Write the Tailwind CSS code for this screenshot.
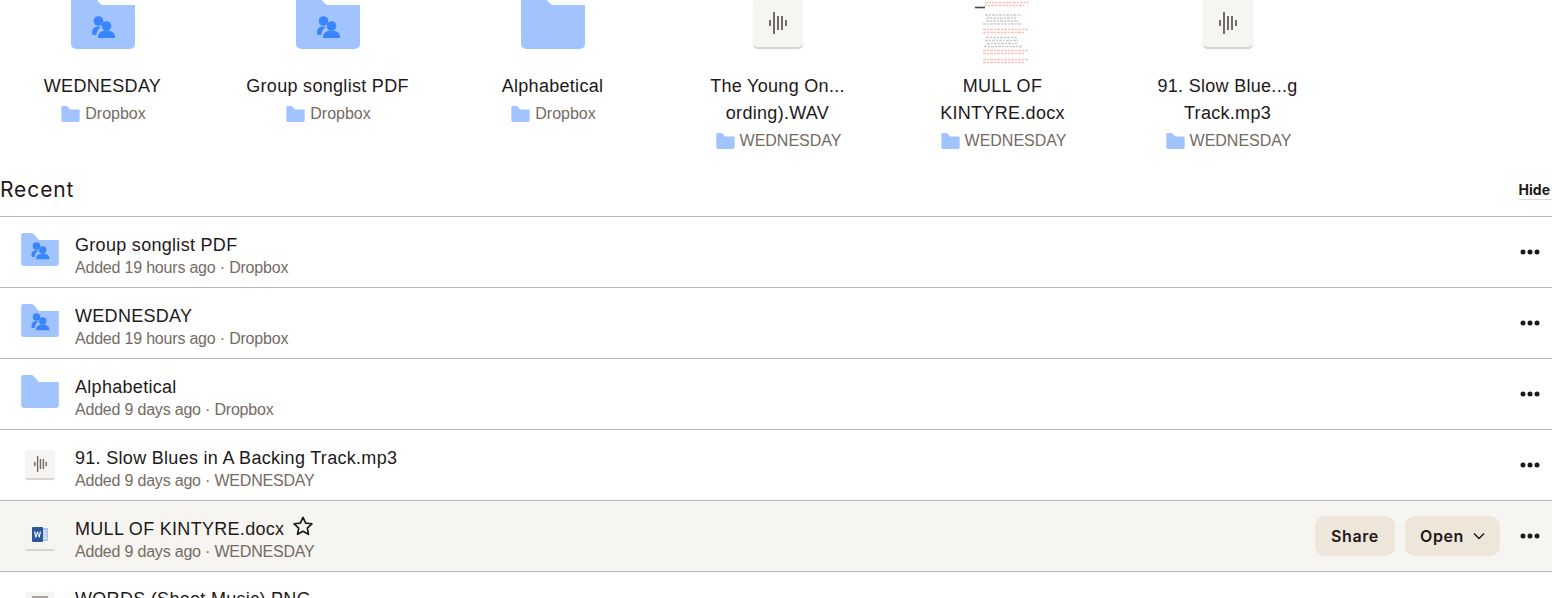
<!DOCTYPE html>
<html lang="en">
<head>
  <meta charset="UTF-8" />
  <title>Dropbox - Recent</title>
  <script src="https://cdn.jsdelivr.net/npm/@tailwindcss/browser@4"></script>
</head>
<body class="bg-white text-[#1e1919] font-['Liberation_Sans',sans-serif] h-[598px] w-[1552px] overflow-hidden">
  <svg class="hidden">
    <defs>
      <symbol id="folder" viewBox="0 0 64 56"><path fill="#a1c4ff" d="M0 4a4 4 0 0 1 4-4h13c2 0 3 .6 4.500 2l7 8c1 1.300 2 2 3.500 2h32v39a5 5 0 0 1-5 5H5a5 5 0 0 1-5-5z"/></symbol>
      <symbol id="people" viewBox="0 0 64 56"><g fill="#3984ff"><circle cx="27.500" cy="28" r="4.800"/><path d="M21 40c0-4 2-6.500 6-6.500 1 0 2 .2 3 .6-2.500 1.400-4 3.400-4.500 6.900-.2.800-.5 1-1 1H23c-1.300 0-2-.8-2-2z"/><circle cx="35.500" cy="33" r="4.800"/><path d="M27 45v-1c0-3.800 3-6.500 8.500-6.500S44 40.200 44 44v1z"/></g></symbol>
      <symbol id="wave" viewBox="0 0 18 22"><g fill="#736c64"><rect x="0" y="8" width="2" height="6"/><rect x="4" y="0" width="2" height="22"/><rect x="8" y="4" width="2" height="14"/><rect x="12" y="4" width="2" height="14"/><rect x="16" y="8" width="2" height="6"/></g></symbol>
      <symbol id="dots" viewBox="0 0 20 6"><g fill="#1e1919"><circle cx="3" cy="3" r="2.500"/><circle cx="10" cy="3" r="2.500"/><circle cx="17" cy="3" r="2.500"/></g></symbol>
    </defs>
  </svg>

  <section class="flex h-[160px] -ml-[10px]">
    <div class="w-[225px] h-[160px] flex flex-col items-center">
      <div class="h-[57px] -mt-2 w-16 relative shrink-0"><svg class="w-16 h-14 absolute bottom-0"><use href="#folder"/></svg><svg class="w-16 h-14 absolute bottom-0"><use href="#people"/></svg></div>
      <p class="mt-[24px] text-[18px] tracking-[0.3px] leading-[27px]">WEDNESDAY</p>
      <p class="ml-[2px] flex items-center gap-[5px] text-[#736c64] text-[16px] leading-[27px]"><svg class="w-[19px] h-[16px]"><use href="#folder"/></svg>Dropbox</p>
    </div>
    <div class="w-[225px] h-[160px] flex flex-col items-center">
      <div class="h-[57px] -mt-2 w-16 relative shrink-0"><svg class="w-16 h-14 absolute bottom-0"><use href="#folder"/></svg><svg class="w-16 h-14 absolute bottom-0"><use href="#people"/></svg></div>
      <p class="mt-[24px] text-[18px] tracking-[0.3px] leading-[27px]">Group songlist PDF</p>
      <p class="ml-[2px] flex items-center gap-[5px] text-[#736c64] text-[16px] leading-[27px]"><svg class="w-[19px] h-[16px]"><use href="#folder"/></svg>Dropbox</p>
    </div>
    <div class="w-[225px] h-[160px] flex flex-col items-center">
      <div class="h-[57px] -mt-2 w-16 relative shrink-0"><svg class="w-16 h-14 absolute bottom-0"><use href="#folder"/></svg></div>
      <p class="mt-[24px] text-[18px] tracking-[0.3px] leading-[27px]">Alphabetical</p>
      <p class="ml-[2px] flex items-center gap-[5px] text-[#736c64] text-[16px] leading-[27px]"><svg class="w-[19px] h-[16px]"><use href="#folder"/></svg>Dropbox</p>
    </div>
    <div class="w-[225px] h-[160px] flex flex-col items-center">
      <div class="h-[57px] -mt-2 shrink-0 flex items-end"><div class="w-[50px] h-[50px] flex items-center justify-center bg-[#f7f5f2] rounded-[5px] border-b-2 border-[#d9d4cd] shadow-[0_0_1px_#d9d4cd]"><svg class="w-[18px] h-[22px]"><use href="#wave"/></svg></div></div>
      <p class="mt-[24px] text-[18px] tracking-[0.3px] leading-[27px] text-center">The Young On...<br>ording).WAV</p>
      <p class="ml-[2px] flex items-center gap-[5px] text-[#736c64] text-[16px] leading-[27px]"><svg class="w-[19px] h-[16px]"><use href="#folder"/></svg>WEDNESDAY</p>
    </div>
    <div class="w-[225px] h-[160px] flex flex-col items-center">
      <div class="h-[57px] -mt-2 shrink-0">
        <svg class="w-[56px] h-[64px] mt-2" viewBox="0 0 56 64" fill="none" stroke-width="1.600" stroke-dasharray="3 1 2 1">
          <g stroke="#f7a8a3" opacity="0.7"><path d="M10 2.500h44M9 5.500h40M8 29.500h45M8 32.500h41M8 50.500h45M8 53.500h41M8 59.500h45M8 62.500h41"/></g>
          <g stroke="#a5a2a0" opacity="0.55"><path d="M10 15h36M11 18h30M11 21h33M8 24h39M11 37.500h32M10 40.500h33M12 43.500h30M9 46.500h38"/></g>
          <path d="M0 7.500h10" stroke="#444" stroke-dasharray="none"/>
        </svg>
      </div>
      <p class="mt-[24px] text-[18px] tracking-[0.3px] leading-[27px] text-center">MULL OF<br>KINTYRE.docx</p>
      <p class="ml-[2px] flex items-center gap-[5px] text-[#736c64] text-[16px] leading-[27px]"><svg class="w-[19px] h-[16px]"><use href="#folder"/></svg>WEDNESDAY</p>
    </div>
    <div class="w-[225px] h-[160px] flex flex-col items-center">
      <div class="h-[57px] -mt-2 shrink-0 flex items-end"><div class="w-[50px] h-[50px] flex items-center justify-center bg-[#f7f5f2] rounded-[5px] border-b-2 border-[#d9d4cd] shadow-[0_0_1px_#d9d4cd]"><svg class="w-[18px] h-[22px]"><use href="#wave"/></svg></div></div>
      <p class="mt-[24px] text-[18px] tracking-[0.3px] leading-[27px] text-center">91. Slow Blue...g<br>Track.mp3</p>
      <p class="ml-[2px] flex items-center gap-[5px] text-[#736c64] text-[16px] leading-[27px]"><svg class="w-[19px] h-[16px]"><use href="#folder"/></svg>WEDNESDAY</p>
    </div>
  </section>

  <div class="flex items-center justify-between h-[56px]">
    <h2 class="font-['Inter',sans-serif] text-[21px] tracking-[0.9px] mt-[3px]">Recent</h2>
    <button class="font-['Inter',sans-serif] font-bold text-[14px] leading-[19px] border-b border-[#dfdcd8] pr-[2px] mt-[3px]">Hide</button>
  </div>

  <ul class="border-t border-[#bbb5ae]">
    <li class="h-[71px] border-b border-[#bbb5ae] flex items-center pl-[21px] pr-[12px]">
      <div class="relative w-[38px] h-[33px] -mt-[5px]"><svg class="absolute w-[38px] h-[33px]"><use href="#folder"/></svg><svg class="absolute w-[50px] h-[44px] -left-[6px] -top-[9px]"><use href="#people"/></svg></div>
      <div class="ml-[16px] flex-1 mt-[5px]"><p class="text-[18px] tracking-[0.3px] leading-[27px]">Group songlist PDF</p><p class="text-[#736c64] text-[16px] tracking-[-0.2px] leading-[18px]">Added 19 hours ago · Dropbox</p></div>
      <svg class="w-5 h-[6px]"><use href="#dots"/></svg>
    </li>
    <li class="h-[71px] border-b border-[#bbb5ae] flex items-center pl-[21px] pr-[12px]">
      <div class="relative w-[38px] h-[33px] -mt-[5px]"><svg class="absolute w-[38px] h-[33px]"><use href="#folder"/></svg><svg class="absolute w-[50px] h-[44px] -left-[6px] -top-[9px]"><use href="#people"/></svg></div>
      <div class="ml-[16px] flex-1 mt-[5px]"><p class="text-[18px] tracking-[0.3px] leading-[27px]">WEDNESDAY</p><p class="text-[#736c64] text-[16px] tracking-[-0.2px] leading-[18px]">Added 19 hours ago · Dropbox</p></div>
      <svg class="w-5 h-[6px]"><use href="#dots"/></svg>
    </li>
    <li class="h-[71px] border-b border-[#bbb5ae] flex items-center pl-[21px] pr-[12px]">
      <svg class="w-[38px] h-[33px] -mt-[5px]"><use href="#folder"/></svg>
      <div class="ml-[16px] flex-1 mt-[5px]"><p class="text-[18px] tracking-[0.3px] leading-[27px]">Alphabetical</p><p class="text-[#736c64] text-[16px] tracking-[-0.2px] leading-[18px]">Added 9 days ago · Dropbox</p></div>
      <svg class="w-5 h-[6px]"><use href="#dots"/></svg>
    </li>
    <li class="h-[71px] border-b border-[#bbb5ae] flex items-center pl-[25px] pr-[12px]">
      <div class="w-[30px] h-[30px] mt-[-1px] flex items-center justify-center bg-[#f7f5f2] rounded-[3px] border-b-2 border-[#d9d4cd]"><svg class="w-[13px] h-[16px]"><use href="#wave"/></svg></div>
      <div class="ml-[20px] flex-1 mt-[5px]"><p class="text-[18px] tracking-[0.3px] leading-[27px]">91. Slow Blues in A Backing Track.mp3</p><p class="text-[#736c64] text-[16px] tracking-[-0.2px] leading-[18px]">Added 9 days ago · WEDNESDAY</p></div>
      <svg class="w-5 h-[6px]"><use href="#dots"/></svg>
    </li>
    <li class="h-[71px] border-b border-[#bbb5ae] flex items-center pl-[25px] pr-[12px] bg-[#f7f5f2]">
      <div class="w-[30px] h-[30px] mt-[-1px] flex items-center justify-center rounded-[3px] border-b-2 border-[#d9d4cd]">
        <svg class="w-4 h-[15px]" viewBox="0 0 16 15"><rect x="5" y="1" width="11" height="13" fill="#a9c3e8"/><g fill="#f7f5f2"><rect x="10" y="3.500" width="5" height="1"/><rect x="10" y="6" width="5" height="1"/><rect x="10" y="8.500" width="5" height="1"/><rect x="10" y="11" width="5" height="1"/></g><rect x="0" y="0" width="11" height="15" rx="1" fill="#2b579a"/><path d="M2 4.500l1.300 6h1l1.200-4 1.200 4h1l1.300-6H7.800l-.8 4-1.100-4h-.8l-1.100 4-.8-4z" fill="#fff"/></svg>
      </div>
      <div class="ml-[20px] flex-1 mt-[5px]">
        <p class="text-[18px] tracking-[0.3px] leading-[27px] flex items-center gap-[8px]">MULL OF KINTYRE.docx
          <svg class="w-[22px] h-[22px] -mt-[8px]" viewBox="0 0 24 24" fill="none" stroke="#1e1919" stroke-width="1.800" stroke-linejoin="round"><path d="M12 2.500l2.900 6.300 6.800.8-5 4.700 1.300 6.800-6-3.400-6 3.400 1.300-6.800-5-4.700 6.800-.8z"/></svg>
        </p>
        <p class="text-[#736c64] text-[16px] tracking-[-0.2px] leading-[18px]">Added 9 days ago · WEDNESDAY</p>
      </div>
      <button class="w-[80px] h-10 rounded-[10px] bg-[#eee6da] font-['Inter',sans-serif] font-semibold text-[16px] tracking-[0.6px]">Share</button>
      <button class="ml-[10px] w-[95px] h-10 rounded-[10px] bg-[#eee6da] font-['Inter',sans-serif] font-semibold text-[16px] tracking-[0.6px] flex items-center justify-center gap-[9px]">Open
        <svg class="w-3 h-2" viewBox="0 0 12 8" fill="none" stroke="#1e1919" stroke-width="1.500"><path d="M1 1.500l5 5 5-5"/></svg>
      </button>
      <svg class="ml-[20px] w-5 h-[6px]"><use href="#dots"/></svg>
    </li>
    <li class="h-[71px] flex items-start pl-[25px] pr-[12px] pt-[20px]">
      <div class="w-[30px] h-[30px] bg-[#f7f5f2] rounded-[3px] flex justify-center pt-[4px]"><div class="w-[16px] h-[4px] bg-[#a8a29b]"></div></div>
      <p class="ml-[20px] text-[18px] tracking-[0.3px] leading-[27px] -mt-[6px]">WORDS (Sheet Music).PNG</p>
    </li>
  </ul>
</body>
</html>
